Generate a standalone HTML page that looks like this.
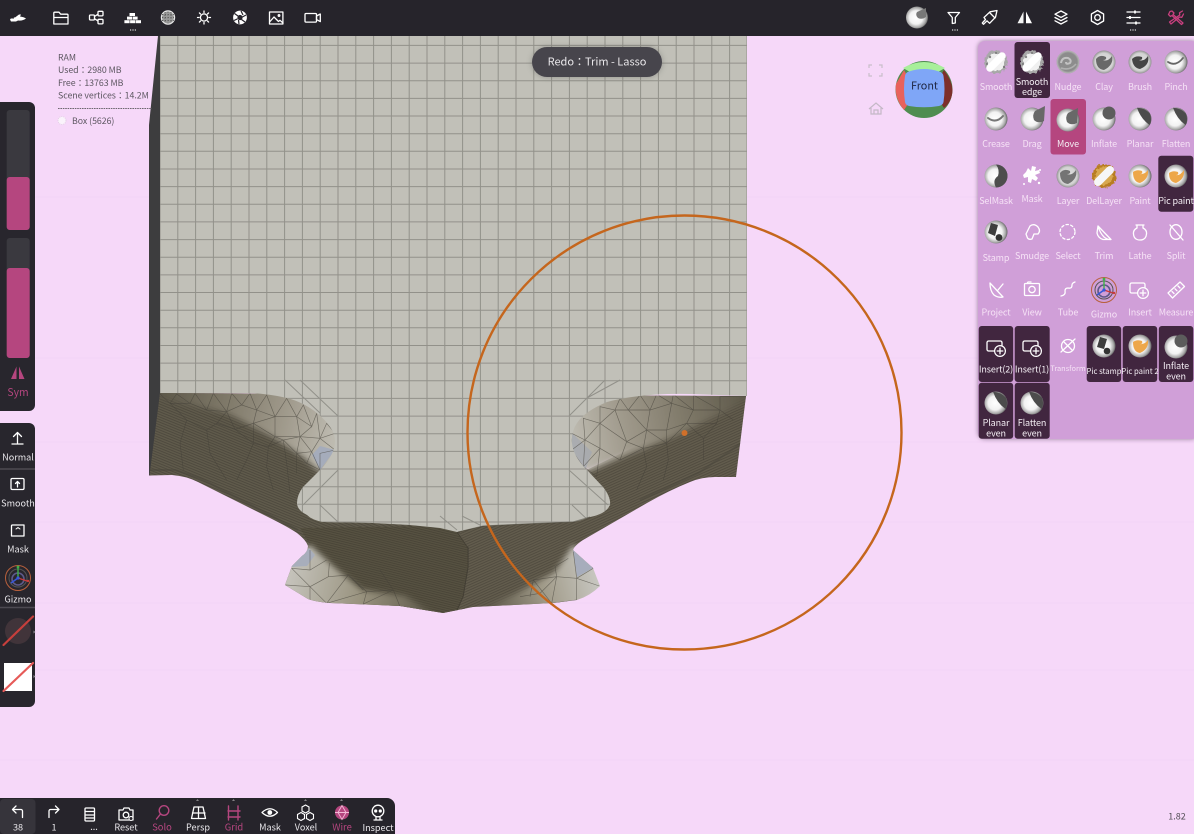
<!DOCTYPE html>
<html lang="en"><head><meta charset="utf-8"><title>Nomad Sculpt</title>
<style>
html,body{margin:0;padding:0;background:#f6d8f9;width:1194px;height:834px;overflow:hidden}
svg{display:block;position:absolute;left:0;top:0;filter:blur(.35px)}
text{font-family:"Noto Sans CJK JP","Liberation Sans",sans-serif}
.p{font-size:9px;letter-spacing:-.12px;fill:#f6e2f6;text-anchor:middle}
.w{font-size:9px;letter-spacing:-.12px;fill:#f4eef4;text-anchor:middle}
.b{font-size:9.1px;fill:#e8e6ea;text-anchor:middle}
.k{font-size:9.4px;fill:#b5467f;text-anchor:middle}
.i{font-size:8.8px;letter-spacing:-.04px;fill:#5c5660}
.s{fill:none;stroke:#fff;stroke-width:1.3;stroke-linecap:round;stroke-linejoin:round}
.m{fill:none;stroke:#45423a;stroke-width:1.9;opacity:.62}
</style></head><body>
<svg width="1194" height="834" viewBox="0 0 1194 834" xmlns="http://www.w3.org/2000/svg">
<defs>
<radialGradient id="ws" cx=".46" cy=".5" r=".55"><stop offset="0" stop-color="#fff"/><stop offset=".55" stop-color="#f2f2f2"/><stop offset=".84" stop-color="#a5a5a5"/><stop offset="1" stop-color="#585858"/></radialGradient>
<radialGradient id="gs" cx=".5" cy=".5" r=".55"><stop offset="0" stop-color="#e4e4e4"/><stop offset=".7" stop-color="#d2d2d2"/><stop offset=".88" stop-color="#9c9c9c"/><stop offset="1" stop-color="#5a5a5a"/></radialGradient>
<radialGradient id="ns" cx=".5" cy=".5" r=".55"><stop offset="0" stop-color="#8e8e8e"/><stop offset=".72" stop-color="#8c8c8c"/><stop offset=".88" stop-color="#b6b6b6"/><stop offset="1" stop-color="#5f5f5f"/></radialGradient>
<pattern id="h1" width="2.4" height="2.4" patternUnits="userSpaceOnUse" patternTransform="rotate(22)"><rect width="2.4" height="2.4" fill="#5f5a4b"/><rect width="2.4" height=".8" fill="#4c473c"/></pattern>
<pattern id="h2" width="2.4" height="2.4" patternUnits="userSpaceOnUse" patternTransform="rotate(-24)"><rect width="2.4" height="2.4" fill="#625c4d"/><rect width="2.4" height=".8" fill="#4e493d"/></pattern>
<pattern id="h3" width="2.2" height="2.2" patternUnits="userSpaceOnUse" patternTransform="rotate(14)"><rect width="2.2" height="2.2" fill="#565141"/><rect width="2.2" height=".7" fill="#464135"/></pattern>
<linearGradient id="bl" gradientUnits="userSpaceOnUse" x1="335" y1="435" x2="165" y2="400"><stop offset="0" stop-color="#bebbb1"/><stop offset=".3" stop-color="#a09a8c"/><stop offset=".65" stop-color="#7f7969"/><stop offset="1" stop-color="#5f5a4b"/></linearGradient>
<linearGradient id="br" gradientUnits="userSpaceOnUse" x1="572" y1="440" x2="745" y2="405"><stop offset="0" stop-color="#bebbb1"/><stop offset=".3" stop-color="#a09a8c"/><stop offset=".65" stop-color="#7f7969"/><stop offset="1" stop-color="#5f5a4b"/></linearGradient>
<linearGradient id="bb" gradientUnits="userSpaceOnUse" x1="290" y1="580" x2="430" y2="610"><stop offset="0" stop-color="#c4c2ba"/><stop offset=".5" stop-color="#99937f"/><stop offset="1" stop-color="#5f5a4b"/></linearGradient>
<linearGradient id="bc" gradientUnits="userSpaceOnUse" x1="598" y1="580" x2="490" y2="610"><stop offset="0" stop-color="#c8c7c1"/><stop offset=".5" stop-color="#a09a88"/><stop offset="1" stop-color="#5f5a4b"/></linearGradient>
<filter id="bb2" x="-20%" y="-20%" width="140%" height="140%"><feGaussianBlur stdDeviation="3"/></filter>
<filter id="rough" x="-30%" y="-30%" width="160%" height="160%"><feTurbulence type="fractalNoise" baseFrequency=".35" numOctaves="2" seed="4"/><feDisplacementMap in="SourceGraphic" scale="4.5" xChannelSelector="R" yChannelSelector="G"/></filter>
<clipPath id="sil"><path d="M160,393L149.5,475.5 172,475Q186,476 198,482L270,518Q288,527 297,533Q306,540 308,546Q308,552 302,556L292,566 285,585 308,599Q316,602 330,603L400,606 443,613 473,607 553,603 577,600Q590,596 600,586L593,568 573,550Q574,546 583,540L647,503Q670,490 690,482Q702,477 715,477L736,477 746,396Z"/></clipPath>
<clipPath id="gc"><path d="M160,36H747V396L690,394Q640,393 607,402Q585,411 577,423Q571,432 572,443Q573,456 587,470L603,487Q611,497 610,505Q606,514 590,517Q580,521 573,522L523,524 483,526 457,532 440,528 410,525 373,523 323,522Q312,520 307,515Q297,510 297,503Q297,495 303,487L320,470Q335,455 335,441Q335,428 317,413Q303,402 287,398Q265,393 245,393H160Z"/></clipPath>
<g id="S"><g filter="url(#rough)"><circle r="11.5" fill="#a8a8a8"/><circle r="8.6" fill="#f0f0f0"/></g><path d="M-6,6 6,-6" stroke="#fff" stroke-width="7.5" stroke-linecap="round"/><circle cx="-6" cy="-5" r="1.2" fill="#8a8a8a"/><circle cx="0" cy="-9" r="1" fill="#777"/><circle cx="-9" cy="2" r="1" fill="#777"/><circle cx="8" cy="5" r="1.1" fill="#777"/></g>
<circle id="W" r="11.5" fill="url(#ws)"/>
<circle id="G" r="11.5" fill="url(#gs)"/>
<circle id="N" r="11.5" fill="url(#ns)"/>
<path id="cone" d="M-1,-7 L9,-12 L8,3 Q2,6 -2,2 Q-4,-3 -1,-7Z" fill="#686868"/>
<path id="plan" d="M-3,-11.3 Q5,-11 9.8,-5.5 Q11.8,-1 10.5,4.5 L9.5,6 Q1,0 -3,-11.3Z" fill="#4c4c4c"/>
<g id="INS"><rect x="-9" y="-7" width="15" height="10" rx="1.6" class="s"/><circle cx="4" cy="3" r="5.4" fill="currentColor" stroke="#fff" stroke-width="1.2"/><path d="M1.2,3H6.8M4,.2V5.8" class="s" stroke-width="1.2"/></g>
<g id="GZ"><circle r="12.5" fill="none" stroke="#b8603c" stroke-width="1"/><circle r="9" fill="none" stroke="#555" stroke-width="1"/><circle cy="1" r="6" fill="none" stroke="#5d5a8a" stroke-width="1.6"/><path d="M0,0V-10" stroke="#3fb14a" stroke-width="1.4"/><path d="M0,0L9,3" stroke="#c83a3a" stroke-width="1.3"/><path d="M0,0L-7,5" stroke="#3857d8" stroke-width="1.6"/><circle r="1.6" fill="#3857d8"/><circle cy="-11" r="1.4" fill="#3fb14a"/><circle cx="10" cy="3" r="1.2" fill="#c83a3a"/></g>
</defs>

<rect width="1194" height="834" fill="#f6d8f9"/>
<g stroke="#f0cff3" stroke-width="1" fill="none" opacity=".45"><path d="M0,197H1194M0,358H1194M0,442H1194M0,522H1194M0,603H1194M0,670H1194M0,760H1194"/></g>

<!-- MODEL -->
<path d="M158,36H161V394L150,475.5H149V125Z" fill="#3d3d3e"/>
<g clip-path="url(#sil)">
<rect x="145" y="390" width="320" height="230" fill="url(#h1)"/>
<path d="M460,532L750,390V480H700L600,560 560,610H460Z" fill="url(#h2)"/>
<path d="M440,526L457,532 468,548 468,567 463,597 457,612 440,618 395,608 330,590 314,552 300,528Z" fill="url(#h3)"/>
<path d="M150,470 175,470 200,478 298,530M746,440 700,472 640,500" fill="none" stroke="#4a463b" stroke-width="2" opacity=".5"/>
<!-- light blobs, soft lower edges -->
<path d="M155,385H245L287,390 325,405 345,433 345,455 320,472 303,457 273,437 227,413 160,398Z" fill="url(#bl)" filter="url(#bb2)"/>
<path d="M750,388H690L640,388 600,395 570,415 562,450 587,472 620,458 673,437 727,411 750,397Z" fill="url(#br)" filter="url(#bb2)"/>
<path d="M310,545 285,565 278,590 310,608 400,612 440,618 405,596 362,590 335,568Z" fill="url(#bb)" filter="url(#bb2)"/>
<path d="M573,545 600,565 606,590 577,606 473,612 515,594 555,572Z" fill="url(#bc)" filter="url(#bb2)"/>
<path d="M320,470 335,450 320,446 312,455Z" fill="#a5acbb"/>
<path d="M572,453 585,471 592,452 572,433Z" fill="#a4a8b0" opacity=".75"/>
<path d="M309,548 291,567 307,566 315,555Z" fill="#a8aebc"/>
<path d="M573,550 577,577 593,568Z" fill="#a7adbc"/>
<!-- mesh left -->
<g transform="translate(140,380) scale(.33333)" class="m">
<path d="M60,42L90,70 110,42 150,70 165,40 200,90 220,40 260,95 275,40 305,75 330,40 350,90 380,45 405,110 440,55 470,110 490,75 515,140 530,100 540,175 560,130 585,160 540,175 585,210 540,220 540,270 515,215 540,175 480,170 515,140 470,110 405,110 350,90 305,75 260,95 200,90 150,70 90,70"/>
<path d="M260,95L230,130 285,148 260,95M285,148 340,130 350,90M340,130 405,110 405,170 340,130 340,190 285,148M405,170 480,170 470,110M405,170 385,200 340,190M405,170 430,180 480,170 470,220 515,215 480,170M430,180 470,220 500,250 515,215M385,200 430,180M500,250 540,270"/>
<path d="M230,130 200,150 140,120 90,70M340,190 320,240 290,300M385,200 380,260 400,330M430,180 440,250 450,340M470,220 470,280M140,120 120,190 130,270M200,150 210,220 260,300"/>
<path d="M510,510L510,570 455,565 510,570 560,540M437,615 510,620 455,565M510,620 510,660M510,620 560,670 625,585 565,590 510,620M565,590 568,550M625,585 680,635 560,670M625,585 670,630M680,635 670,672 760,630 680,635M760,630 780,680M760,630 720,570"/>
</g>
<!-- mesh right -->
<g transform="translate(440,380) scale(.33333)" class="m">
<path d="M395,160L435,180 430,115 480,130 480,80 525,90 540,55 565,90 600,45 630,90 650,43 695,70 700,43 760,90 760,45 840,90 840,50 918,48"/>
<path d="M395,210L435,180 480,130 525,90 565,90 630,90 695,70 760,90 840,90 880,120M430,260 435,180 480,205 480,130 560,185 525,90M560,185 620,150 565,90M620,150 630,90M620,150 680,150 695,70M680,150 740,130 760,90M740,130 830,130 840,90M395,160 395,210 430,260 480,205 540,240 560,185 610,205 620,150 680,190 680,150M610,205 680,190 740,130 790,175 830,130M540,240 610,205M470,290 430,260M470,290 480,205"/>
<path d="M680,190 685,240 670,300M790,175 790,240M610,205 620,260 590,330M85,500 85,560 70,650"/>
<path d="M400,515L410,595 350,590 345,560 385,535M410,595 460,565 440,540M410,595 478,618M410,595 410,660 335,670 350,590 280,600 335,670M280,600 270,650M410,595 350,590M350,590 300,640 240,650"/>
</g>
</g>
<path d="M457,532L468,548 468,567 463,597 457,610" fill="none" stroke="#3f3b30" stroke-width="1" opacity=".7"/>

<!-- grey top + grid -->
<g clip-path="url(#gc)">
<rect x="160" y="36" width="587" height="500" fill="#c1c0b8"/>
<path fill="none" stroke="#92918a" stroke-width="1" d="M160 36V530M177.8 36V530M195.6 36V530M213.4 36V530M231.2 36V530M249 36V530M266.8 36V530M284.6 36V530M302.4 36V530M320.2 36V530M338 36V530M355.8 36V530M373.6 36V530M391.4 36V530M409.2 36V530M427 36V530M444.8 36V530M462.6 36V530M480.4 36V530M498.2 36V530M516 36V530M533.8 36V530M551.6 36V530M569.4 36V530M587.2 36V530M605 36V530M622.8 36V530M640.6 36V530M658.4 36V530M676.2 36V530M694 36V530M711.8 36V530M729.6 36V530M747 36V530"/>
<path fill="none" stroke="#92918a" stroke-width="1" d="M160 45.4H747M160 63.1H747M160 80.7H747M160 98.4H747M160 116H747M160 133.7H747M160 151.3H747M160 169H747M160 186.6H747M160 204.3H747M160 221.9H747M160 239.6H747M160 257.2H747M160 274.9H747M160 292.5H747M160 310.2H747M160 327.8H747M160 345.5H747M160 363.1H747M160 380.8H747M160 398.4H747M160 416.1H747M160 433.7H747M160 451.4H747M160 469H747M160 486.7H747M160 504.3H747M160 522H747"/>
<path fill="none" stroke="#92918a" stroke-width="1" d="M320,413L285,380M338,416L300,380M338,470L303,505M320,505L338,522M569,416L605,380M587,398L620,380M569,470L608,505M572,505L590,522M440,516L457,530M462,516L480,525"/>
</g>
<path d="M458,532 483,526 523,524 573,522 590,517" fill="none" stroke="#3f3b30" stroke-width="1" opacity=".5"/>

<!-- brush circle -->
<circle cx="684.5" cy="432.5" r="217" fill="none" stroke="#c5661d" stroke-width="2.4"/>
<circle cx="684.5" cy="433" r="3" fill="#d0702a"/>

<!-- info -->
<text class="i" x="58" y="60.5">RAM</text>
<text class="i" x="58" y="73">Used：2980 MB</text>
<text class="i" x="58" y="86">Free：13763 MB</text>
<text class="i" x="58" y="98.5">Scene vertices：14.2M</text>
<path d="M58,108.5H152" stroke="#6e6870" stroke-width="1" stroke-dasharray="1.6 .8"/>
<circle cx="62" cy="120.5" r="4" fill="#faf3fb" stroke="#e3cfe6" stroke-dasharray="1 1"/>
<text class="i" x="72" y="124">Box (5626)</text>

<!-- toast -->
<rect x="532" y="47" width="130" height="30" rx="15" fill="#47454c" style="filter:drop-shadow(0 0 3px rgba(60,60,60,.35))"/>
<text x="597" y="65.5" font-size="11" fill="#e9e7ea" text-anchor="middle">Redo：Trim - Lasso</text>

<!-- top bar -->
<rect width="1194" height="36" fill="#26242b"/>
<path d="M10,19.5 Q12,17 15,17.5 L19,14.5 21,14.5 20,16.5 Q24,17 26,18.5 Q23,21 18,20.5 L16,21.5 H11Z" fill="#fff"/><path d="M10,18H14" stroke="#26242b"/>
<path class="s" d="M53.8,24V13.2a1,1 0 0 1 1-1H59l1.7,2H67a1,1 0 0 1 1,1V24ZM54,17.5H67.8"/>
<g class="s"><rect x="89.5" y="15" width="5" height="5" rx="1"/><rect x="98" y="11.3" width="5" height="4.6" rx="1"/><rect x="98" y="19.3" width="5" height="4.6" rx="1"/><path d="M94.5,16.5 98,14.2M94.5,18.7 98,21"/></g>
<g fill="#fff"><rect x="129.5" y="13" width="5.5" height="3"/><rect x="127" y="16.6" width="5" height="3"/><rect x="132.6" y="16.6" width="5" height="3"/><rect x="124.4" y="20.2" width="5.2" height="3"/><rect x="130.1" y="20.2" width="5" height="3"/><rect x="135.6" y="20.2" width="5.4" height="3"/></g>
<path d="M130,30H137" stroke="#fff" stroke-dasharray="1.2 1.2"/>
<circle cx="168" cy="17.5" r="6.6" fill="#9a9a9a" stroke="#e8e8e8" stroke-width="1.2"/>
<path d="M162,14.5H174M162,17.5H174M162,20.5H174M165,12V23M168,11.5V23.5M171,12V23" stroke="#5a5a5a" stroke-width=".9" stroke-dasharray="1.2 1.6"/>
<circle class="s" cx="204" cy="17.5" r="3.6"/><path class="s" d="M204,11V12.5M204,22.5V24M197.5,17.5H199M209,17.5H210.5M199.4,12.9 200.5,14M207.5,21 208.6,22.1M199.4,22.1 200.5,21M207.5,14 208.6,12.9"/>
<circle cx="240" cy="17.5" r="6.9" fill="#fff"/><circle cx="240" cy="17.5" r="2.6" fill="#26242b"/><path d="M241,11 243,15M246,15 242.4,17M245,22 241.5,19.5M239,24 238.5,20M234,20.5 237.6,18.8M234.5,13.5 238,16" stroke="#26242b" stroke-width="1.2"/>
<g class="s"><rect x="269.5" y="12" width="13.4" height="12"/><path d="M270,21.5 274,17 278.5,21.5 280,20.3 283,23"/><circle cx="279" cy="15.5" r=".8"/></g>
<g class="s"><rect x="305" y="13.5" width="11.5" height="8.6" rx="1"/><path d="M316.5,16 320.3,14V21.6L316.5,19.6Z"/></g>
<circle cx="917" cy="17.5" r="11" fill="url(#ws)"/><path d="M917,12 926,8 926,17 Q922,20 918,18 Q915,15 917,12Z" fill="#787878"/>
<path class="s" d="M948,12.5H959.5L955.3,17.5V23L952.3,23.5V17.5Z"/>
<path d="M952,30H959" stroke="#fff" stroke-dasharray="1.2 1.2"/>
<g class="s"><path d="M984,17.5 990,11.8 997,10.5 995.5,17.2 989.6,23.3 987,20.8 983.5,24.3 982.3,23 985.5,19.5Z"/><path d="M990,13 995,18"/></g>
<path d="M1023.5,11.5 1023.5,23.3H1017.5Z" fill="#f2f2f2"/><path d="M1026,11.5 1026,23.3H1032Z" fill="#fff"/>
<g class="s"><path d="M1061,11 1067,14.2 1061,17.4 1055,14.2Z"/><path d="M1055,17.5 1061,20.7 1067,17.5M1055,20.8 1061,24 1067,20.8"/></g>
<g class="s"><path d="M1097.5,10.5 1103.6,14V21L1097.5,24.5 1091.4,21V14Z"/><circle cx="1097.5" cy="17.5" r="2.8"/></g>
<g class="s"><path d="M1127,12H1140M1127,17.5H1140M1127,23H1140"/></g><path d="M1135,10.5V13.5M1130,16V19M1136,21.5V24.5" stroke="#fff" stroke-width="1.8"/>
<path d="M1130,30H1137" stroke="#fff" stroke-dasharray="1.2 1.2"/>
<g fill="none" stroke="#c9407f" stroke-width="1.3" stroke-linejoin="round" stroke-linecap="round"><path d="M1170,11.5 1172,11 1174,13 1173,14.5 1183,23 1181.5,24.5 1172,15.5 1170.5,16.5 1168.5,14.5Z"/><path d="M1182.5,11 1179.5,12.8 1179.8,15 1169.5,22 1171,24 1179.5,17 1181.8,17.3 1183.5,14"/></g>

<!-- left panel 1 -->
<rect x="-8" y="102" width="43" height="309" rx="6" fill="#28262d"/>
<rect x="6.7" y="110" width="23" height="120" rx="3" fill="#3a393f"/>
<path d="M6.7,180a3,3 0 0 1 3-3h17a3,3 0 0 1 3,3v47a3,3 0 0 1-3,3h-17a3,3 0 0 1-3-3Z" fill="#b5467f"/>
<rect x="6.7" y="238" width="23" height="120" rx="3" fill="#3a393f"/>
<path d="M6.7,271a3,3 0 0 1 3-3h17a3,3 0 0 1 3,3v84a3,3 0 0 1-3,3h-17a3,3 0 0 1-3-3Z" fill="#b5467f"/>
<path d="M16.5,366.5V379H11ZM19,366.5V379H24.5Z" fill="#b5467f"/>
<text class="k" x="18" y="396" style="font-size:10.4px">Sym</text>

<!-- left panel 2 -->
<rect x="-8" y="423" width="43" height="284" rx="6" fill="#28262d"/>
<path d="M0,469H35M0,607.5H35" stroke="#4d4a52" stroke-width="1.4"/>
<path class="s" d="M17.5,443V433M13.5,436.5 17.5,432.5 21.5,436.5M12,444H23"/>
<text class="b" x="18" y="460.5">Normal</text>
<rect class="s" x="11" y="478.5" width="13" height="11" rx="1.2"/><path d="M17.5,487V482M15.5,483.5 17.5,481.5 19.5,483.5" class="s"/>
<text class="b" x="18" y="506.5">Smooth</text>
<path class="s" d="M24,525H12.5a1,1 0 0 0-1,1V536H24V525Z"/><path class="s" d="M16,529 18,527.5 20,529" style="stroke-width:1"/>
<text class="b" x="18" y="552.5">Mask</text>
<use href="#GZ" x="18" y="578"/>
<text class="b" x="18" y="602.5">Gizmo</text>
<circle cx="18" cy="631" r="13" fill="#41343a"/>
<path d="M3.5,645 33,616.5" stroke="#c63f3c" stroke-width="2.2" stroke-linecap="round"/>
<path d="M33.5,630.5l2,1.5-2,1.5Z M33.5,675l2,1.5-2,1.5Z" fill="#8b8890"/>
<rect x="4" y="663" width="28" height="28" fill="#fff"/>
<path d="M3.5,691 33,663" stroke="#e65a58" stroke-width="2.2" stroke-linecap="round"/>

<!-- bottom bar -->
<path d="M0,798H387a8,8 0 0 1 8,8V834H0Z" fill="#26242b"/>
<rect x="0" y="799" width="35.5" height="35" rx="4" fill="#36343b"/>
<path class="s" d="M22.5,817.5V811a1.5,1.5 0 0 0-1.5-1.5H13M16,806 12.5,809.5 16,813"/>
<text class="b" x="18" y="830.5">38</text>
<path class="s" d="M49,817.5V811a1.5,1.5 0 0 1 1.5-1.5H58.5M55.5,806 59,809.5 55.5,813"/>
<text class="b" x="54" y="830.5">1</text>
<g class="s"><rect x="85" y="808" width="9.5" height="13" rx="1"/><path d="M85.5,811.5H94M85.5,815H94M85.5,818H94"/></g>
<text class="b" x="94" y="830">...</text>
<g class="s"><path d="M119,810H123L124,808H129L130,810H133V820H119Z"/><circle cx="126" cy="815" r="2.8"/></g><circle cx="131" cy="818.5" r="2" fill="#26242b" stroke="#fff"/>
<text class="b" x="126" y="830.5">Reset</text>
<g fill="none" stroke="#b5467f" stroke-width="1.4" stroke-linecap="round"><circle cx="164" cy="810.5" r="4.8"/><path d="M160.5,814 156.5,819"/></g>
<text class="k" x="162" y="830.5">Solo</text>
<g class="s"><path d="M194,807H203L205.5,818.5H191.5Z"/><path d="M192.5,813H205M198.5,807V818.5"/></g>
<path d="M196,800.5l1.5,-1 1.5,1ZM232,800.5l1.5,-1 1.5,1ZM304,800.5l1.5,-1 1.5,1ZM340,800.5l1.5,-1 1.5,1Z" fill="#ddd"/>
<text class="b" x="198" y="830.5">Persp</text>
<g fill="none" stroke="#b5467f" stroke-width="1.4" stroke-linecap="round"><path d="M228.5,806V820M238,806V820M228,811H240M228,817H240"/></g>
<text class="k" x="234" y="830.5">Grid</text>
<path class="s" d="M262,812.5Q270,805 277.5,812.5Q270,820 262,812.5Z"/><circle cx="269.8" cy="812.5" r="2.4" fill="#fff"/>
<text class="b" x="270" y="830.5">Mask</text>
<g fill="none" stroke="#fff" stroke-width="1.1"><path d="M305.5,805 309,807 309,811 305.5,813 302,811 302,807Z"/><path d="M301,812.5 304.5,814.5 304.5,818.5 301,820.5 297.5,818.5 297.5,814.5Z"/><path d="M310,812.5 313.5,814.5 313.5,818.5 310,820.5 306.5,818.5 306.5,814.5Z"/></g>
<circle cx="342" cy="812.5" r="7" fill="#b5467f"/><path d="M335,812.5H349M342,805.5 338,812.5 342,819.5 346,812.5Z" stroke="#f3b8d6" stroke-width=".9" fill="none"/>
<text class="k" x="342" y="830.5">Wire</text>
<g class="s"><circle cx="378" cy="811" r="5.8"/><path d="M374,820H382M376,816.8V819.5M380,816.8V819.5"/></g><circle cx="375.7" cy="811" r="1.6" fill="#fff"/><circle cx="380.3" cy="811" r="1.6" fill="#fff"/>
<text class="b" x="306" y="830.5">Voxel</text>
<text class="b" x="378" y="831">Inspect</text>

<text x="1177" y="819.5" font-size="9" fill="#4f4a52" text-anchor="middle">1.82</text>

<!-- view cube -->
<g fill="none" stroke="#c9bfca" stroke-width="1.2"><path d="M869,68V65H872M879,65H882V68M882,73V76H879M872,76H869V73"/></g>
<path d="M869,109 876,103 883,109M871,108V114H881V108M874,114V110H878V114" fill="none" stroke="#c4b8c6" stroke-width="1.2"/>
<circle cx="924" cy="89.5" r="28.5" fill="#4f8d50"/>
<path d="M903,68 Q924,56 945,68 L924,80Z" fill="#a8ef9a"/>
<path d="M904,70 L896,84 Q894,98 904,110 L916,92Z" fill="#e8625c"/>
<path d="M944,70 Q952,80 952.5,90 Q952,102 944,108 L932,90Z" fill="#7d2f2b"/>
<path d="M909,71.5Q924,66.5 939,71.5Q943,72.5 943.5,76Q945.5,89 943.5,102Q943,105 939,106Q924,108.5 909,106Q905.5,105 905,102Q903,89 905,76Q905.5,72.5 909,71.5Z" fill="#7fa6f7"/>
<text x="924.5" y="89.5" font-size="10.8" fill="#1e2540" text-anchor="middle">Front</text>

<!-- tool panel -->
<rect x="978" y="41" width="220" height="398" rx="7" fill="#d09fd8" style="filter:drop-shadow(0 0 2.5px rgba(70,50,75,.55))"/>
<rect x="1014.5" y="42" width="35.5" height="56" rx="3" fill="#41263f"/>
<rect x="1050.5" y="99" width="35.5" height="55.5" rx="3" fill="#b5467f"/>
<rect x="1158.3" y="155.7" width="35" height="56" rx="3" fill="#41263f"/>
<rect x="978.7" y="326" width="34.5" height="56" rx="3" fill="#41263f"/>
<rect x="1014.7" y="326" width="35" height="56" rx="3" fill="#41263f"/>
<rect x="1086.7" y="326" width="34.5" height="56" rx="3" fill="#41263f"/>
<rect x="1122.7" y="326" width="34.5" height="56" rx="3" fill="#41263f"/>
<rect x="1158.8" y="326" width="34.5" height="56" rx="3" fill="#41263f"/>
<rect x="978.7" y="382.7" width="34.5" height="56" rx="3" fill="#41263f"/>
<rect x="1014.7" y="382.7" width="35" height="56" rx="3" fill="#41263f"/>

<!-- row 1 -->
<use href="#S" x="996" y="62"/><use href="#S" x="1032" y="62"/>
<use href="#N" x="1068" y="62"/><path d="M1061,63Q1062,57 1068,58Q1072,60 1070,63Q1066,65 1066,62" fill="none" stroke="#c2c2c2" stroke-width="2"/><path d="M1061,68Q1070,71 1076,64" fill="none" stroke="#b0b0b0" stroke-width="1.6"/>
<use href="#G" x="1104" y="62"/><path d="M1096,59Q1100,54 1106,57 1107,60 1103,60Q1108,62 1112,56Q1114,65 1104,70Q1096,69 1096,59Z" fill="#686868"/>
<use href="#G" x="1140" y="62"/><path d="M1132,59Q1136,55 1142,57 1143,60 1139,60Q1144,62 1148,56Q1150,65 1140,69Q1133,68 1132,59Z" fill="#454545"/>
<use href="#W" x="1176" y="62"/><path d="M1168,62Q1176,67 1183,58" fill="none" stroke="#666" stroke-width="1.8" stroke-linecap="round"/>
<text class="p" x="996" y="90">Smooth</text><text class="w" x="1032" y="85">Smooth</text><text class="w" x="1032" y="95">edge</text><text class="p" x="1068" y="90">Nudge</text><text class="p" x="1104" y="90">Clay</text><text class="p" x="1140" y="90">Brush</text><text class="p" x="1176" y="90">Pinch</text>
<!-- row 2 -->
<use href="#W" x="996" y="119"/><path d="M988,118Q996,124 1003,116" fill="none" stroke="#777" stroke-width="2" stroke-linecap="round"/>
<use href="#W" x="1032" y="119"/><use href="#cone" x="1036" y="118"/>
<use href="#W" x="1068" y="120"/><use href="#cone" x="1069" y="120"/>
<use href="#W" x="1104" y="119"/><circle cx="1109" cy="113" r="6.5" fill="#5c5c5c"/>
<use href="#W" x="1140" y="119"/><use href="#plan" x="1140" y="119"/>
<use href="#W" x="1176" y="119"/><use href="#plan" x="1176" y="119"/>
<text class="p" x="996" y="147">Crease</text><text class="p" x="1032" y="147">Drag</text><text class="w" x="1068" y="147">Move</text><text class="p" x="1104" y="147">Inflate</text><text class="p" x="1140" y="147">Planar</text><text class="p" x="1176" y="147">Flatten</text>
<!-- row 3 -->
<use href="#W" x="996" y="176"/><path d="M996,164.5A11.5,11.5 0 0 1 996,187.5Q992,180 998,176Q1000,170 996,164.5Z" fill="#4d4d4d"/>
<g fill="#fff"><path d="M1026,172l2-4 3,3 1-5 4,1-1,4 4-1 1,3-5,2 3,3-2,3-4-2-1,4-3-1 0-5-4 1-1-3Z"/><circle cx="1024" cy="184" r="1"/><circle cx="1039" cy="183" r="1.2"/><circle cx="1040" cy="170" r="1"/></g>
<use href="#G" x="1068" y="176"/><path d="M1060,173Q1064,168 1070,171 1071,174 1067,174Q1072,176 1076,170Q1078,179 1068,184Q1060,183 1060,173Z" fill="#747474"/>
<g filter="url(#rough)"><circle cx="1104" cy="176" r="12" fill="#b87d22"/><circle cx="1104" cy="176" r="9" fill="#d8a850"/></g><path d="M1098,182 1110,170" stroke="#f6f6f6" stroke-width="8" stroke-linecap="round"/>
<use href="#W" x="1140" y="176"/><path d="M1133,172Q1137,169 1142,171 1143,174 1140,174Q1144,175 1148,170Q1149,179 1140,183Q1133,182 1133,172Z" fill="#eda74a"/>
<use href="#W" x="1176" y="176"/><path d="M1169,173Q1173,170 1178,172 1179,175 1176,175Q1180,176 1184,170Q1185,179 1176,183Q1169,182 1169,173Z" fill="#eda74a"/>
<text class="p" x="996" y="204">SelMask</text><text class="p" x="1032" y="202">Mask</text><text class="p" x="1068" y="204">Layer</text><text class="p" x="1104" y="204">DelLayer</text><text class="p" x="1140" y="204">Paint</text><text class="w" x="1176" y="204">Pic paint</text>
<!-- row 4 -->
<use href="#W" x="996" y="232"/><path d="M991,223 998,225 995,236 988,233Z" fill="#3e3e3e"/><circle cx="999" cy="237.5" r="3.4" fill="#333"/>
<path class="s" d="M1026,234 1030,226Q1034,223 1038,227Q1041,231 1038,234L1034,234 1032,239Q1029,240 1027.5,238Z"/>
<circle class="s" cx="1067.5" cy="232" r="7.5" stroke-dasharray="2.4 2.4"/>
<path class="s" d="M1098,226Q1100,233 1104,237 1108,240 1111,239.5L1098,226ZM1098,226 1097,233Q1098,238 1103,239.5L1111,239.5"/>
<path class="s" d="M1136,225H1144M1137,225.5V228Q1133,230 1133.5,234Q1134,240 1140,240Q1146,240 1146.5,234Q1147,230 1143,228V225.5"/>
<g class="s"><ellipse cx="1176" cy="232" rx="6" ry="7.3"/><path d="M1170,225 1183,240"/></g>
<text class="p" x="996" y="261">Stamp</text><text class="p" x="1032" y="259">Smudge</text><text class="p" x="1068" y="259">Select</text><text class="p" x="1104" y="259">Trim</text><text class="p" x="1140" y="259">Lathe</text><text class="p" x="1176" y="259">Split</text>
<!-- row 5 -->
<g class="s"><path d="M990,283Q990,291 994,295Q998,298 1003,297L990,283Z"/><path d="M998,290 1003,284"/></g>
<g class="s"><rect x="1024.5" y="283.5" width="15" height="12" rx="1"/><circle cx="1032" cy="289.5" r="3.2"/><path d="M1027,283.5 1028,282H1031"/></g>
<path class="s" d="M1061,296Q1066,295 1065,291Q1065,288 1068,288Q1072,289 1072,285Q1072,283 1075,282"/>
<use href="#GZ" x="1104" y="290"/>
<g color="#d09fd8"><use href="#INS" x="1139" y="290"/></g>
<g class="s"><path d="M1168,293 1180,282 1184.5,286.5 1172.5,298Z"/><path d="M1172,291.5 1174,293.5M1175,288.8 1177,290.8M1178,286 1180,288"/></g>
<text class="p" x="996" y="315.5">Project</text><text class="p" x="1032" y="315.5">View</text><text class="p" x="1068" y="315.5">Tube</text><text class="p" x="1104" y="317.5">Gizmo</text><text class="p" x="1140" y="315.5">Insert</text><text class="p" x="1176" y="315.5">Measure</text>
<!-- row 6 -->
<g color="#41263f"><use href="#INS" x="996" y="348"/><use href="#INS" x="1032" y="348"/></g>
<g class="s"><ellipse cx="1068" cy="346" rx="6.5" ry="6.5"/><path d="M1061,352 1075,339M1064,342 1072,350"/></g>
<use href="#W" x="1104" y="346"/><path d="M1100,337 1107,339 1104,349 1097,347Z" fill="#3e3e3e"/><circle cx="1107" cy="351" r="3.3" fill="#333"/>
<use href="#W" x="1140" y="346"/><path d="M1133,342Q1137,339 1142,341 1143,344 1140,344Q1144,345 1148,340Q1149,349 1140,353Q1133,352 1133,342Z" fill="#eda74a"/>
<use href="#W" x="1176" y="347"/><circle cx="1181" cy="341" r="6.5" fill="#5c5c5c"/>
<text class="w" x="996" y="372.5">Insert(2)</text><text class="w" x="1032" y="372.5">Insert(1)</text><text x="1068" y="371" font-size="7.4" fill="#f6e2f6" text-anchor="middle">Transform</text><text x="1104" y="374" font-size="7.7" fill="#f4eef4" text-anchor="middle">Pic stamp</text><text x="1140" y="374" font-size="7.7" fill="#f4eef4" text-anchor="middle">Pic paint 2</text><text class="w" x="1176" y="369">Inflate</text><text class="w" x="1176" y="379.5">even</text>
<!-- row 7 -->
<use href="#W" x="996" y="403"/><use href="#plan" x="996" y="403"/>
<use href="#W" x="1032" y="403"/><use href="#plan" x="1032" y="403"/>
<text class="w" x="996" y="426">Planar</text><text class="w" x="996" y="436.5">even</text><text class="w" x="1032" y="426">Flatten</text><text class="w" x="1032" y="436.5">even</text>
</svg>
</body></html>
